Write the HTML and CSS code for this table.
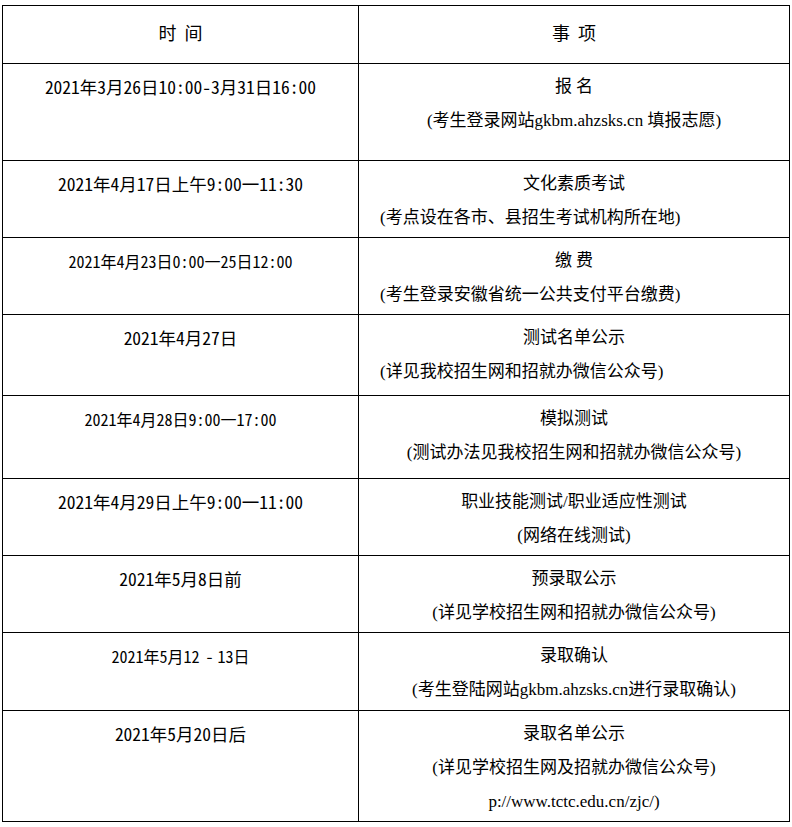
FILE: index.html
```html
<!DOCTYPE html>
<html lang="zh-CN">
<head>
<meta charset="utf-8">
<title>招生时间安排</title>
<link rel="stylesheet" href="styles.css">
</head>
<body>
<table class="schedule">
  <colgroup>
    <col class="c-time">
    <col class="c-item">
  </colgroup>
  <thead>
    <tr class="head">
      <th>时 间</th>
      <th>事 项</th>
    </tr>
  </thead>
  <tbody>
    <tr class="h97">
      <td class="time">2021年3月26日10:00-3月31日16:00</td>
      <td class="item"><div>报 名</div><div>(考生登录网站gkbm.ahzsks.cn 填报志愿)</div></td>
    </tr>
    <tr class="h77">
      <td class="time">2021年4月17日上午9:00一11:30</td>
      <td class="item"><div>文化素质考试</div><div class="sub-left">(考点设在各市、县招生考试机构所在地)</div></td>
    </tr>
    <tr class="h77">
      <td class="time small">2021年4月23日0:00一25日12:00</td>
      <td class="item"><div>缴 费</div><div class="sub-left">(考生登录安徽省统一公共支付平台缴费)</div></td>
    </tr>
    <tr class="h81">
      <td class="time">2021年4月27日</td>
      <td class="item"><div>测试名单公示</div><div class="sub-left">(详见我校招生网和招就办微信公众号)</div></td>
    </tr>
    <tr class="h83">
      <td class="time small">2021年4月28日9:00一17:00</td>
      <td class="item"><div>模拟测试</div><div>(测试办法见我校招生网和招就办微信公众号)</div></td>
    </tr>
    <tr class="h77">
      <td class="time">2021年4月29日上午9:00一11:00</td>
      <td class="item"><div>职业技能测试/职业适应性测试</div><div>(网络在线测试)</div></td>
    </tr>
    <tr class="h77">
      <td class="time">2021年5月8日前</td>
      <td class="item"><div>预录取公示</div><div>(详见学校招生网和招就办微信公众号)</div></td>
    </tr>
    <tr class="h78">
      <td class="time small">2021年5月12<span class="dash"> - </span>13日</td>
      <td class="item"><div>录取确认</div><div>(考生登陆网站gkbm.ahzsks.cn进行录取确认)</div></td>
    </tr>
    <tr class="h111">
      <td class="time">2021年5月20日后</td>
      <td class="item"><div>录取名单公示</div><div>(详见学校招生网及招就办微信公众号)</div><div>p://www.tctc.edu.cn/zjc/)</div></td>
    </tr>
  </tbody>
</table>
</body>
</html>
```
FILE: styles.css
```css
html, body {
  background: #ffffff;
}

body {
  margin: 5px 0 0 2px;
  color: #000000;
}

.schedule {
  border-collapse: collapse;
  table-layout: fixed;
  width: 787px;
}

.c-time {
  width: 356px;
}

.c-item {
  width: 431px;
}

.schedule th,
.schedule td {
  border: 1px solid #000000;
  text-align: center;
  padding: 0;
}

.schedule th {
  font-family: "Noto Sans CJK SC", "Liberation Sans", sans-serif;
  font-weight: normal;
  font-size: 18px;
  word-spacing: 4px;
  vertical-align: middle;
  padding-bottom: 6px;
}

.head {
  height: 58px;
}

.schedule td {
  vertical-align: top;
  padding-top: 6px;
  line-height: 34px;
}

.time {
  font-family: "Noto Sans Mono CJK SC", "Liberation Mono", "Noto Sans CJK SC", monospace;
  font-size: 17.5px;
}

.time.small {
  font-size: 16px;
}

.time .dash {
  letter-spacing: -2px;
}

.item {
  font-family: "Liberation Serif", "Noto Sans CJK SC", serif;
  font-size: 17px;
}

.item .sub-left {
  text-align: left;
  padding-left: 21px;
}

.h77 { height: 77px; }
.h78 { height: 78px; }
.h81 { height: 81px; }
.h83 { height: 83px; }
.h97 { height: 97px; }
.h111 { height: 111px; }
```
